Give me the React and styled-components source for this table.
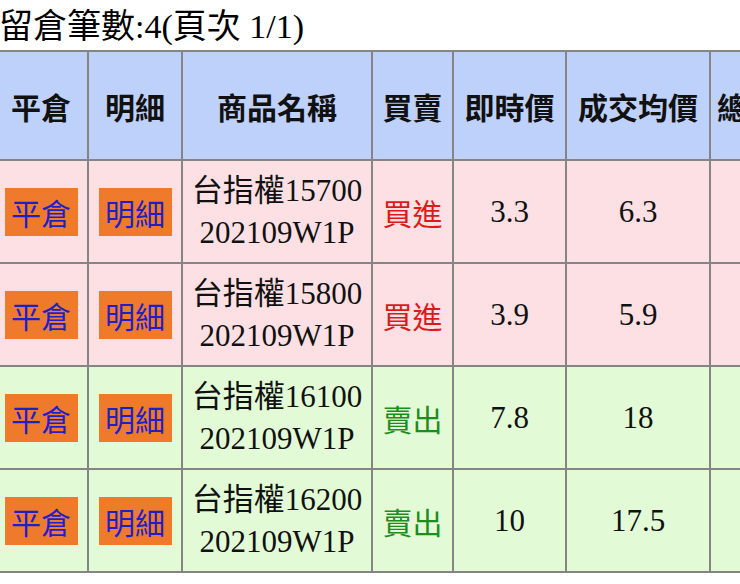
import styled, { createGlobalStyle } from "styled-components";

const GlobalStyle = createGlobalStyle`
  html, body {
    margin: 0;
    padding: 0;
    background: #ffffff;
    overflow: hidden;
  }
  body {
    font-family: "Liberation Serif", "Noto Sans CJK TC", serif;
  }
`;

const Page = styled.div`
  width: 740px;
  height: 584px;
  overflow: hidden;
`;

const Title = styled.div`
  font-size: 34px;
  line-height: 46px;
  height: 46px;
  padding-top: 4px;
  margin-left: -1px;
  color: #000;
  white-space: nowrap;
`;

const Table = styled.table`
  border-collapse: collapse;
  table-layout: fixed;
  margin-left: -7px;
  width: 836px;
`;

const HeadRow = styled.tr`
  height: 109px;
  background: #bed1fb;
`;

const Row = styled.tr`
  height: 103px;
  background: ${(p) => (p.side === "buy" ? "#fde0e3" : "#e2fbd6")};
`;

const Th = styled.th`
  border: 2px solid #858585;
  padding: 0 6px;
  font-family: "Noto Sans CJK TC", "Noto Sans", sans-serif;
  font-weight: 700;
  font-size: 30px;
  color: #111;
  white-space: nowrap;
  text-align: ${(p) => p.align || "center"};
`;

const Td = styled.td`
  border: 2px solid #858585;
  padding: 0;
  text-align: center;
  font-size: 31px;
  color: #111;
  white-space: nowrap;
`;

const NameTd = styled(Td)`
  line-height: 42px;
`;

const ActionButton = styled.span`
  display: inline-flex;
  align-items: center;
  justify-content: center;
  width: 73px;
  height: 48px;
  background: #f07a2c;
  color: #1f1fc8;
  font-family: "Noto Sans CJK TC", "Noto Sans", sans-serif;
  font-size: 30px;
`;

const Side = styled.span`
  font-family: "Noto Sans CJK TC", "Noto Sans", sans-serif;
  font-size: 30px;
  color: ${(p) => (p.side === "buy" ? "#dc1a1a" : "#1e8c1e")};
`;

const positions = [
  { name: "台指權15700", month: "202109W1P", side: "buy", price: "3.3", avg: "6.3" },
  { name: "台指權15800", month: "202109W1P", side: "buy", price: "3.9", avg: "5.9" },
  { name: "台指權16100", month: "202109W1P", side: "sell", price: "7.8", avg: "18" },
  { name: "台指權16200", month: "202109W1P", side: "sell", price: "10", avg: "17.5" },
];

const App = () => {
  return (
    <Page>
      <GlobalStyle />
      <Title>留倉筆數:4(頁次 1/1)</Title>
      <Table>
        <colgroup>
          <col style={{ width: 94 }} />
          <col style={{ width: 94 }} />
          <col style={{ width: 190 }} />
          <col style={{ width: 81 }} />
          <col style={{ width: 113 }} />
          <col style={{ width: 144 }} />
          <col style={{ width: 120 }} />
        </colgroup>
        <thead>
          <HeadRow>
            <Th>平倉</Th>
            <Th>明細</Th>
            <Th>商品名稱</Th>
            <Th>買賣</Th>
            <Th>即時價</Th>
            <Th>成交均價</Th>
            <Th align="left">總成本</Th>
          </HeadRow>
        </thead>
        <tbody>
          {positions.map((p) => (
            <Row key={p.name} side={p.side}>
              <Td>
                <ActionButton>平倉</ActionButton>
              </Td>
              <Td>
                <ActionButton>明細</ActionButton>
              </Td>
              <NameTd>
                {p.name}
                <br />
                {p.month}
              </NameTd>
              <Td>
                <Side side={p.side}>{p.side === "buy" ? "買進" : "賣出"}</Side>
              </Td>
              <Td>{p.price}</Td>
              <Td>{p.avg}</Td>
              <Td />
            </Row>
          ))}
        </tbody>
      </Table>
    </Page>
  );
};

export default App;
